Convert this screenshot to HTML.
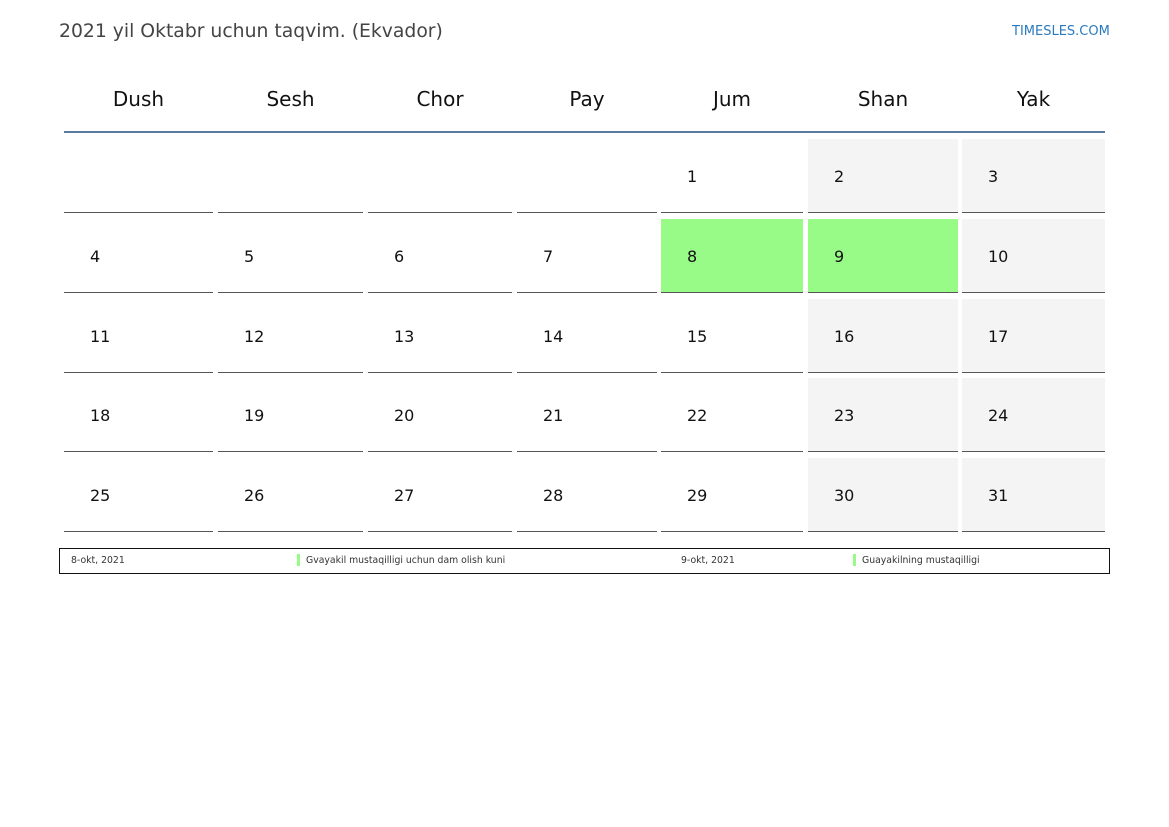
<!DOCTYPE html>
<html><head><meta charset="utf-8"><style>
body{margin:0;width:1169px;height:827px;background:#fff;font-family:"DejaVu Sans","Liberation Sans",sans-serif;position:relative;overflow:hidden}
.a{position:absolute}
.t{left:59px;top:21px;font-size:18.8px;color:#444}
.l{left:1012px;top:24px;font-size:13px;color:#2a7ac0}
.h{font-size:20px;color:#111;top:87px;text-align:center}
.c{position:absolute;border-bottom:1.5px solid #555;height:73px}
.c span{position:absolute;left:26px;top:28px;font-size:16px;color:#111}
.w{background:#f4f4f4}
.g{background:#98fb88}
.f{font-size:9.3px;color:#333;top:555px}
</style></head><body>
<div class="a t">2021 yil Oktabr uchun taqvim. (Ekvador)</div>
<div class="a l">TIMESLES.COM</div>
<div class="a h" style="left:64px;width:149px">Dush</div>
<div class="a h" style="left:218px;width:145px">Sesh</div>
<div class="a h" style="left:368px;width:144px">Chor</div>
<div class="a h" style="left:517px;width:140px">Pay</div>
<div class="a h" style="left:661px;width:142px">Jum</div>
<div class="a h" style="left:808px;width:150px">Shan</div>
<div class="a h" style="left:962px;width:143px">Yak</div>
<div class="a" style="left:64px;top:131px;width:1041px;height:2px;background:#5a7aa0"></div>
<div id="g"></div>
<script>
var xs=[[64,149],[218,145],[368,144],[517,140],[661,142],[808,150],[962,143]];
var ys=[139,219,299,378,458];var h='';
for(var r=0;r<5;r++)for(var c=0;c<7;c++){var d=r*7+c-3;var cls='c';
if(c>=5)cls+=' w';if(d==8||d==9)cls+=' g';
h+='<div class="'+cls+'" style="left:'+xs[c][0]+'px;top:'+ys[r]+'px;width:'+xs[c][1]+'px">'+(d>=1&&d<=31?'<span>'+d+'</span>':'')+'</div>';}
document.getElementById('g').innerHTML=h;
</script>
<div class="a" style="left:59px;top:548px;width:1049px;height:24px;border:1.5px solid #111"></div>
<div class="a f" style="left:71px">8-okt, 2021</div>
<div class="a" style="left:297px;top:554px;width:3px;height:12px;background:#98fb88"></div>
<div class="a f" style="left:306px">Gvayakil mustaqilligi uchun dam olish kuni</div>
<div class="a f" style="left:681px">9-okt, 2021</div>
<div class="a" style="left:853px;top:554px;width:3px;height:12px;background:#98fb88"></div>
<div class="a f" style="left:862px">Guayakilning mustaqilligi</div>
</body></html>
